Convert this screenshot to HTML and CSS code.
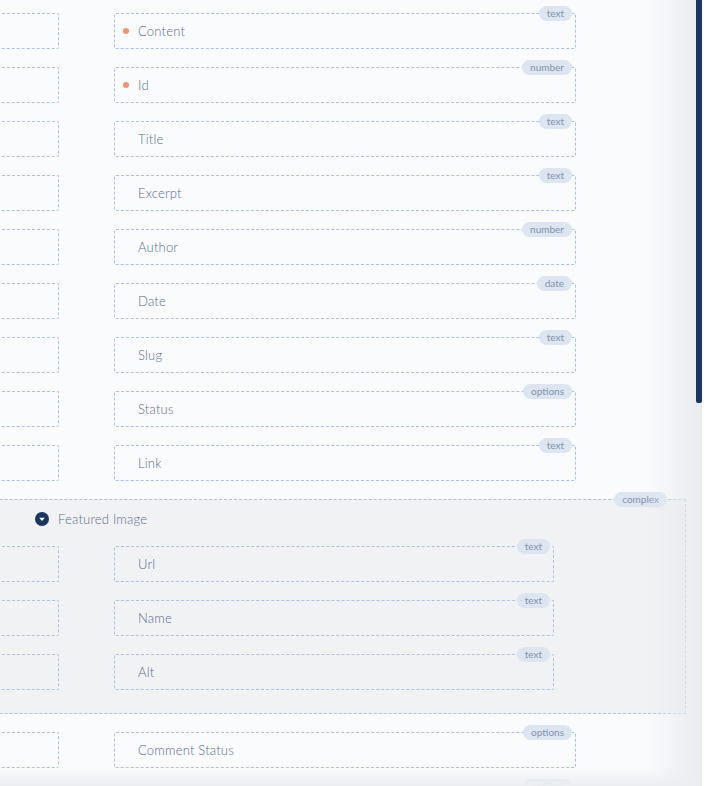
FILE: index.html
```html
<!DOCTYPE html>
<html>
<head>
    <meta charset="UTF-8">
    <meta name="viewport" content="width=device-width, initial-scale=1.0">
    <title>Post fields</title>
    <link rel="stylesheet" href="styles.css">
</head>
<body>
    <div class="panel">
        <div class="content">
            <div class="form">
                <div class="row">
                    <div class="box"></div>
                    <div class="box field"><span class="mark"><i class="dot"></i></span>Content<span class="badge">text</span></div>
                </div>
                <div class="row">
                    <div class="box"></div>
                    <div class="box field"><span class="mark"><i class="dot"></i></span>Id<span class="badge">number</span></div>
                </div>
                <div class="row">
                    <div class="box"></div>
                    <div class="box field"><span class="mark"></span>Title<span class="badge">text</span></div>
                </div>
                <div class="row">
                    <div class="box"></div>
                    <div class="box field"><span class="mark"></span>Excerpt<span class="badge">text</span></div>
                </div>
                <div class="row">
                    <div class="box"></div>
                    <div class="box field"><span class="mark"></span>Author<span class="badge">number</span></div>
                </div>
                <div class="row">
                    <div class="box"></div>
                    <div class="box field"><span class="mark"></span>Date<span class="badge">date</span></div>
                </div>
                <div class="row">
                    <div class="box"></div>
                    <div class="box field"><span class="mark"></span>Slug<span class="badge">text</span></div>
                </div>
                <div class="row">
                    <div class="box"></div>
                    <div class="box field"><span class="mark"></span>Status<span class="badge">options</span></div>
                </div>
                <div class="row">
                    <div class="box"></div>
                    <div class="box field"><span class="mark"></span>Link<span class="badge">text</span></div>
                </div>

                <div class="complex">
                    <span class="badge complex-badge">complex</span>
                    <div class="complex-head">
                        <svg class="toggle" width="14" height="14" viewBox="0 0 14 14">
                            <circle cx="7" cy="7" r="7" fill="#1b365f"/>
                            <path d="M4.2 5.8 L9.8 5.8 L7 8.9 Z" fill="#fff"/>
                        </svg>
                        Featured Image
                    </div>
                    <div class="nested">
                        <div class="row">
                            <div class="box"></div>
                            <div class="box field"><span class="mark"></span>Url<span class="badge">text</span></div>
                        </div>
                        <div class="row">
                            <div class="box"></div>
                            <div class="box field"><span class="mark"></span>Name<span class="badge">text</span></div>
                        </div>
                        <div class="row">
                            <div class="box"></div>
                            <div class="box field"><span class="mark"></span>Alt<span class="badge">text</span></div>
                        </div>
                    </div>
                </div>

                <div class="row">
                    <div class="box"></div>
                    <div class="box field"><span class="mark"></span>Comment Status<span class="badge">options</span></div>
                </div>
                <div class="row">
                    <div class="box"></div>
                    <div class="box field"><span class="badge">options</span></div>
                </div>
            </div>
        </div>
        <div class="scrollbar"><div class="thumb"></div></div>
    </div>
</body>
</html>
```

FILE: styles.css
```css
body {
    margin: 0;
    background: #ffffff;
    font-family: Lato, "Open Sans", sans-serif;
    font-weight: 300;
    color: #5a6c8f;
}
.panel {
    display: flex;
    width: 702px;
    height: 786px;
    overflow: hidden;
}
.content {
    position: relative;
    flex: 1;
    background: #f9fbfd;
    overflow: hidden;
}
.content::after {
    content: '';
    position: absolute;
    top: 0;
    right: 0;
    bottom: 0;
    width: 50px;
    background: linear-gradient(to right, rgba(232, 234, 238, 0), rgba(232, 234, 238, 0.85));
    pointer-events: none;
}
.content::before {
    content: '';
    position: absolute;
    left: 0;
    right: 0;
    bottom: 0;
    height: 18px;
    background: linear-gradient(to bottom, rgba(236, 238, 241, 0), rgba(236, 238, 241, 1));
    z-index: 2;
    pointer-events: none;
}
.scrollbar {
    width: 6px;
    background: #ececee;
}
.thumb {
    height: 403px;
    background: #1b365f;
    border-radius: 0 0 2px 2px;
}
.form {
    margin-left: -200px;
    padding-top: 13px;
    display: flex;
    flex-direction: column;
    gap: 18px;
}
.row {
    display: grid;
    grid-template-columns: 259px 462px;
    gap: 55px;
}
.box {
    position: relative;
    height: 36px;
    box-sizing: border-box;
    border: 1px dashed #a9c1e5;
    border-radius: 2px;
}
.field {
    display: flex;
    align-items: center;
    padding-left: 8px;
    font-size: 13px;
    letter-spacing: 0.2px;
}
.mark {
    width: 15px;
    display: flex;
    align-items: center;
}
.dot {
    width: 6px;
    height: 6px;
    border-radius: 50%;
    background: #f39172;
}
.badge {
    position: absolute;
    top: -8px;
    right: 3px;
    height: 15px;
    line-height: 15px;
    padding: 0 8px;
    border-radius: 8px;
    background: #dde5f0;
    color: #8192ad;
    font-size: 10px;
    font-weight: 400;
    letter-spacing: 0;
}
.complex {
    position: relative;
    margin-left: -20px;
    width: 906px;
    box-sizing: border-box;
    padding: 10px 0 23px 19px;
    border: 1px dashed #a9c1e5;
    background: #f1f2f4;
}
.complex-badge {
    right: 18px;
}
.complex-head {
    display: flex;
    align-items: center;
    height: 18px;
    padding-left: 235px;
    font-size: 13px;
    letter-spacing: 0.2px;
}
.toggle {
    margin-right: 9px;
}
.nested {
    margin-top: 18px;
    display: flex;
    flex-direction: column;
    gap: 18px;
}
.nested .row {
    grid-template-columns: 259px 440px;
}
```
